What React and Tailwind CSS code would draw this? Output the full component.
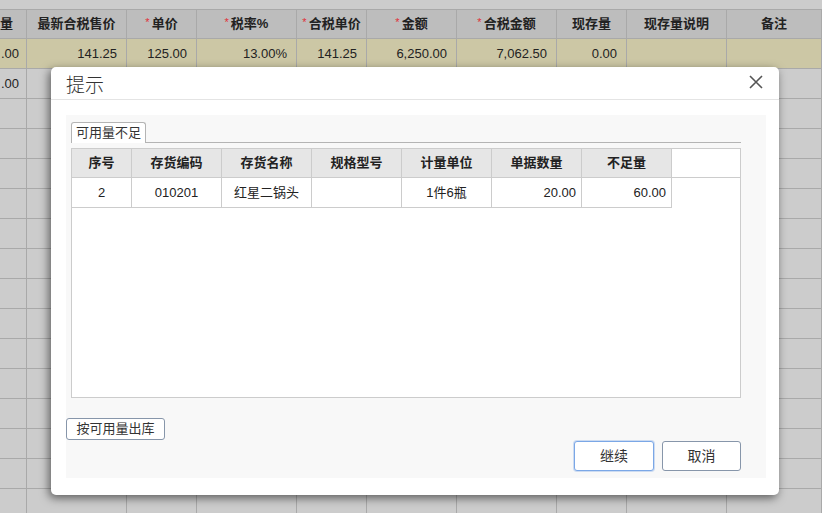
import React from "react";

const cols = [27, 100, 70, 100, 70, 90, 100, 70, 100, 95];
const heads = [
  { t: "量" },
  { t: "最新合税售价" },
  { t: "单价", star: true },
  { t: "税率%", star: true },
  { t: "合税单价", star: true },
  { t: "金额", star: true },
  { t: "合税金额", star: true },
  { t: "现存量" },
  { t: "现存量说明" },
  { t: "备注" },
];
const row1 = [".00", "141.25", "125.00", "13.00%", "141.25", "6,250.00", "7,062.50", "0.00", "", ""];
const row2 = [".00", "", "", "", "", "", "", "", "", ""];

const font = { fontFamily: '"Liberation Sans", Arial, "Noto Sans CJK SC", sans-serif' };

function BgRow({ cells, bg }) {
  return (
    <div className={`flex h-[30px] border-b border-[#a9a9a9] ${bg}`}>
      {cols.map((w, i) => (
        <div
          key={i}
          style={{ width: w }}
          className={`shrink-0 border-r border-[#a9a9a9] overflow-hidden flex items-center text-[13px] text-[#222] whitespace-nowrap ${
            i === 0 ? "justify-start pl-[1px]" : "justify-end pr-[9px]"
          }`}
        >
          {cells ? cells[i] : ""}
        </div>
      ))}
    </div>
  );
}

const dCols = [60, 90, 90, 90, 90, 90, 90];
const dHeads = ["序号", "存货编码", "存货名称", "规格型号", "计量单位", "单据数量", "不足量"];
const dRow = [
  { t: "2", a: "justify-center" },
  { t: "010201", a: "justify-center" },
  { t: "红星二锅头", a: "justify-center" },
  { t: "", a: "justify-center" },
  { t: "1件6瓶", a: "justify-center" },
  { t: "20.00", a: "justify-end pr-[5px]" },
  { t: "60.00", a: "justify-end pr-[5px]" },
];

export default function App() {
  return (
    <div className="relative w-[822px] h-[513px] overflow-hidden bg-[#cccccc]" style={font}>
      <div className="h-[10px] bg-[#cccccc] border-b border-[#a9a9a9]" />
      <div className="flex h-[29px] border-b border-[#a9a9a9] bg-[#bdbdbd]">
        {cols.map((w, i) => (
          <div
            key={i}
            style={{ width: w }}
            className={`shrink-0 border-r border-[#a9a9a9] overflow-hidden flex items-center whitespace-nowrap text-[13px] font-bold text-[#222] ${
              i === 0 ? "justify-start pl-0" : "justify-center"
            }`}
          >
            {heads[i].star && <span className="text-[#e0303a] font-normal mr-[2px] text-[11px] -mt-[3px]">*</span>}
            {heads[i].t}
          </div>
        ))}
      </div>
      <BgRow cells={row1} bg="bg-[#ccc7a5]" />
      <BgRow cells={row2} bg="" />
      {Array.from({ length: 14 }).map((_, i) => (
        <BgRow key={i} />
      ))}

      {/* Dialog */}
      <div className="absolute left-[51px] top-[67px] w-[728px] h-[428px] bg-white rounded-[5px] shadow-[-2px_3px_10px_rgba(0,0,0,0.55)] flex flex-col">
        <div className="h-[33px] shrink-0 border-b border-[#e4e4e4] flex items-center justify-between pl-[15px] pr-[16px]">
          <span
            className="text-[19px] text-[#333] leading-none pt-[1px]"
            style={{ fontFamily: '"Noto Sans CJK SC", sans-serif', fontWeight: 300 }}
          >
            提示
          </span>
          <svg width="14" height="14" viewBox="0 0 14 14" className="mt-[-2px]">
            <path d="M1 1 L13 13 M13 1 L1 13" stroke="#555" strokeWidth="1.6" />
          </svg>
        </div>
        <div className="flex-1 flex flex-col pl-[15px] pr-[13px] pt-[15px] pb-[17px]">
          <div className="flex-1 bg-[#f8f8f8] flex flex-col pt-[7px]">
            <div className="ml-[5px] mr-[25px]">
              <div className="flex h-[21px] border-b border-[#b4b4b4]">
                <div className="h-[21px] w-[75px] bg-white border border-[#b4b4b4] border-b-0 rounded-t-[3px] flex items-center justify-center text-[13px] text-[#333]">
                  可用量不足
                </div>
              </div>
              <div className="mt-[5px] h-[250px] bg-white border border-[#cccccc]">
                <div className="flex h-[29px] border-b border-[#cccccc]">
                  {dCols.map((w, i) => (
                    <div
                      key={i}
                      style={{ width: w }}
                      className="shrink-0 bg-[#e6e6e6] border-r border-[#cccccc] flex items-center justify-center text-[13px] font-bold text-[#222]"
                    >
                      {dHeads[i]}
                    </div>
                  ))}
                </div>
                <div className="flex h-[30px]">
                  {dCols.map((w, i) => (
                    <div
                      key={i}
                      style={{ width: w }}
                      className={`shrink-0 border-r border-b border-[#cccccc] flex items-center text-[13px] text-[#222] ${dRow[i].a}`}
                    >
                      {dRow[i].t}
                    </div>
                  ))}
                </div>
              </div>
            </div>
            <div className="mt-[20px]">
              <button className="h-[22px] w-[99px] bg-white border border-[#8796aa] rounded-[3px] text-[13px] text-[#333] flex items-center justify-center">
                按可用量出库
              </button>
            </div>
            <div className="flex justify-end gap-[8px] mr-[25px] mt-[1px]">
              <button className="h-[30px] w-[80px] bg-white border border-[#7ba7e6] rounded-[3px] text-[14px] text-[#333] flex items-center justify-center shadow-[0_0_0_1px_rgba(123,167,230,0.35)]">
                继续
              </button>
              <button className="h-[30px] w-[79px] bg-white border border-[#8796aa] rounded-[3px] text-[14px] text-[#333] flex items-center justify-center">
                取消
              </button>
            </div>
          </div>
        </div>
      </div>
    </div>
  );
}
